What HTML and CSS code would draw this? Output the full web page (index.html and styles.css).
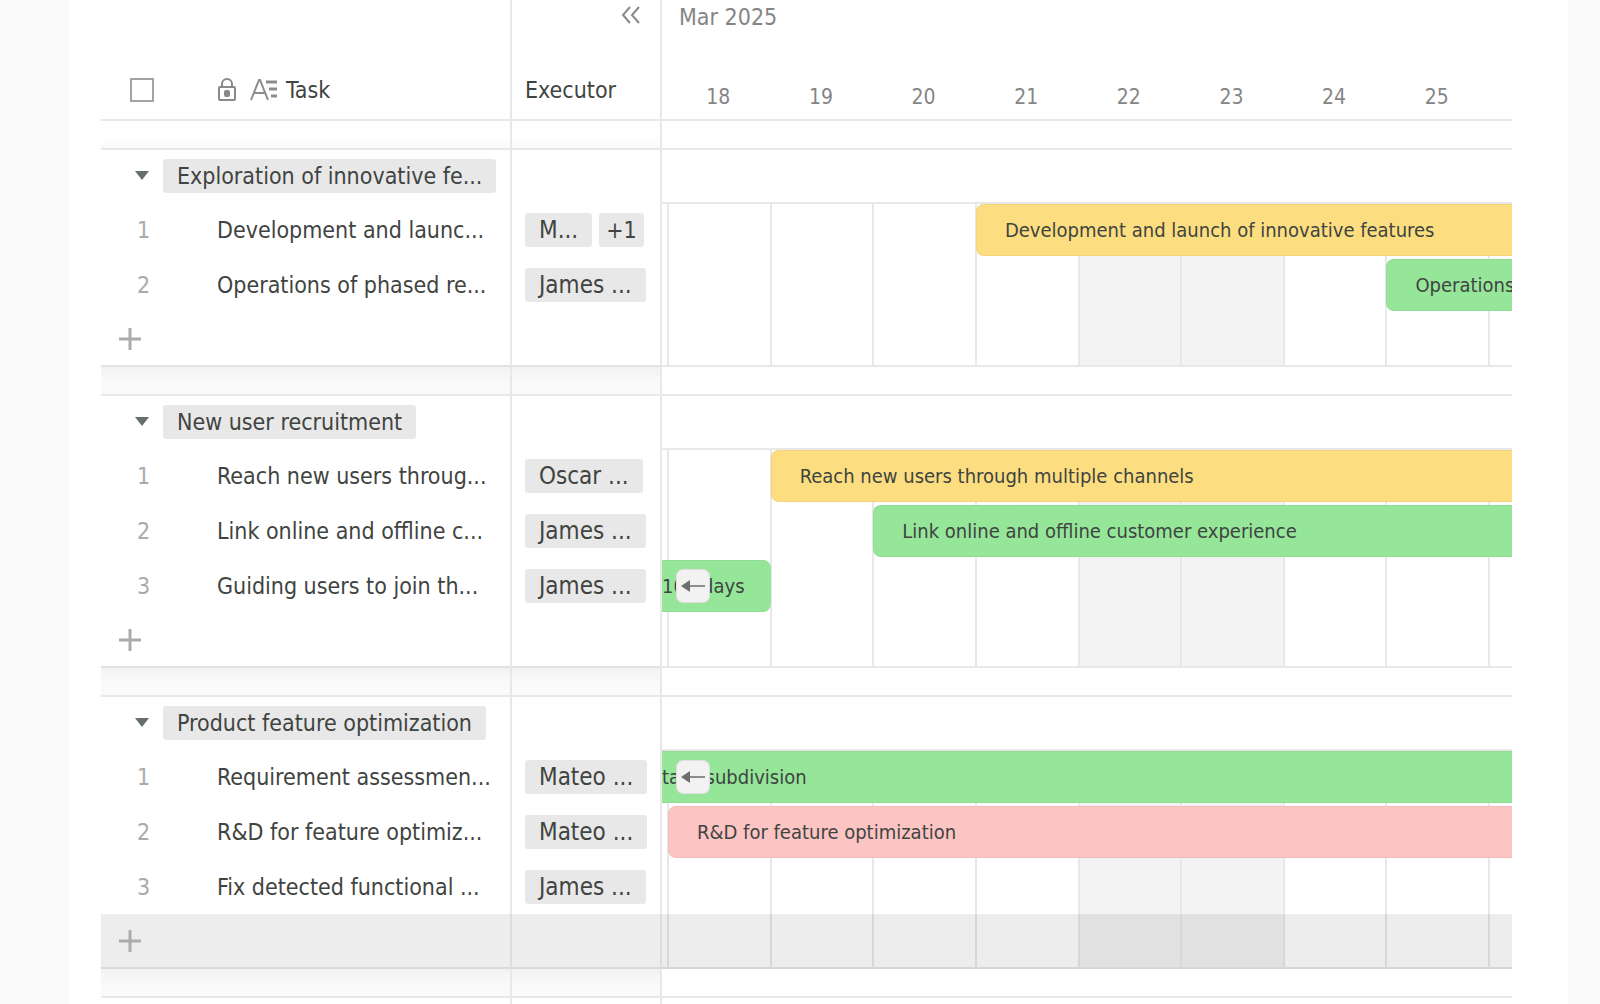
FILE: index.html
```
<!DOCTYPE html>
<html lang="en">
<head>
    <meta charset="UTF-8">
    <meta name="viewport" content="width=device-width, initial-scale=1.0">
    <title>Project Gantt</title>
    <link rel="stylesheet" href="styles.css">
</head>
<body>

<!-- shared icons -->
<svg width="0" height="0" class="sprite">
    <symbol id="caret" viewBox="0 0 14 10"><path d="M0 0h14L7 9z" fill="#66706a"/></symbol>
    <symbol id="plus" viewBox="0 0 22 22"><path d="M11 0v22M0 11h22" stroke="#aeaaaa" stroke-width="3"/></symbol>
    <symbol id="arrow" viewBox="0 0 24 12">
        <path d="M8 6h16" stroke="#8f8b8f" stroke-width="2"/>
        <path d="M0 6l9-6v12z" fill="#6c706c"/>
    </symbol>
</svg>

<main class="gantt">
    <table class="tasks">
        <colgroup>
            <col class="col-task">
            <col class="col-executor">
        </colgroup>
        <thead>
            <tr>
                <th>
                    <div class="task-head">
                        <input type="checkbox" class="check-all" aria-label="Select all">
                        <svg class="icon-lock" width="20" height="24" viewBox="0 0 20 24" fill="none" stroke="#8c8888" stroke-width="2">
                            <path d="M5 9V6a5 5 0 0 1 10 0v3"/>
                            <rect x="2" y="9" width="16" height="13" rx="1"/>
                            <rect x="7" y="12" width="6" height="7" rx="2" fill="#8c8888" stroke="none"/>
                        </svg>
                        <svg class="icon-text" width="28" height="24" viewBox="0 0 28 24" fill="none" stroke="#8f8b8b" stroke-width="2">
                            <path d="M1 22L9 2h1l8 20M4 15h11"/>
                            <path d="M16 4h11M19 11h8M21 18h6" stroke-width="3"/>
                        </svg>
                        <span>Task</span>
                    </div>
                </th>
                <th>
                    <button class="collapse" aria-label="Collapse">
                        <svg width="20" height="18" viewBox="0 0 20 18" fill="none" stroke="#8c8888" stroke-width="2"><path d="M9 1L2 9l7 8M18 1l-7 8 7 8"/></svg>
                    </button>
                    <div class="executor-label">Executor</div>
                </th>
            </tr>
        </thead>

        <tbody>
            <tr class="gap first"><td></td><td></td></tr>
            <tr class="group">
                <td><div class="group-name"><button aria-label="Toggle group"><svg width="14" height="10"><use href="#caret"/></svg></button><span class="tag">Exploration of innovative fe...</span></div></td>
                <td></td>
            </tr>
            <tr>
                <td><div class="task"><span class="num">1</span>Development and launc...</div></td>
                <td><div class="people"><span class="tag">M...</span><span class="tag more">+1</span></div></td>
            </tr>
            <tr>
                <td><div class="task"><span class="num">2</span>Operations of phased re...</div></td>
                <td><div class="people"><span class="tag">James ...</span></div></td>
            </tr>
            <tr class="add">
                <td><button aria-label="Add task"><svg width="22" height="22"><use href="#plus"/></svg></button></td>
                <td></td>
            </tr>
        </tbody>

        <tbody>
            <tr class="gap"><td></td><td></td></tr>
            <tr class="group">
                <td><div class="group-name"><button aria-label="Toggle group"><svg width="14" height="10"><use href="#caret"/></svg></button><span class="tag">New user recruitment</span></div></td>
                <td></td>
            </tr>
            <tr>
                <td><div class="task"><span class="num">1</span>Reach new users throug...</div></td>
                <td><div class="people"><span class="tag">Oscar ...</span></div></td>
            </tr>
            <tr>
                <td><div class="task"><span class="num">2</span>Link online and offline c...</div></td>
                <td><div class="people"><span class="tag">James ...</span></div></td>
            </tr>
            <tr>
                <td><div class="task"><span class="num">3</span>Guiding users to join th...</div></td>
                <td><div class="people"><span class="tag">James ...</span></div></td>
            </tr>
            <tr class="add">
                <td><button aria-label="Add task"><svg width="22" height="22"><use href="#plus"/></svg></button></td>
                <td></td>
            </tr>
        </tbody>

        <tbody>
            <tr class="gap"><td></td><td></td></tr>
            <tr class="group">
                <td><div class="group-name"><button aria-label="Toggle group"><svg width="14" height="10"><use href="#caret"/></svg></button><span class="tag">Product feature optimization</span></div></td>
                <td></td>
            </tr>
            <tr>
                <td><div class="task"><span class="num">1</span>Requirement assessmen...</div></td>
                <td><div class="people"><span class="tag">Mateo ...</span></div></td>
            </tr>
            <tr>
                <td><div class="task"><span class="num">2</span>R&amp;D for feature optimiz...</div></td>
                <td><div class="people"><span class="tag">Mateo ...</span></div></td>
            </tr>
            <tr>
                <td><div class="task"><span class="num">3</span>Fix detected functional ...</div></td>
                <td><div class="people"><span class="tag">James ...</span></div></td>
            </tr>
            <tr class="add active">
                <td><button aria-label="Add task"><svg width="22" height="22"><use href="#plus"/></svg></button></td>
                <td></td>
            </tr>
            <tr class="gap"><td></td><td></td></tr>
            <tr class="rest"><td></td><td></td></tr>
        </tbody>
    </table>

    <section class="timeline">
        <header class="dates">
            <div class="month">Mar 2025</div>
            <div class="days">
                <span></span><span>18</span><span>19</span><span>20</span><span>21</span><span>22</span><span>23</span><span>24</span><span>25</span><span></span>
            </div>
        </header>

        <div class="chart rows-3">
            <i class="day"></i><i class="day"></i><i class="day"></i><i class="day"></i><i class="day"></i><i class="day off"></i><i class="day off"></i><i class="day"></i><i class="day"></i><i class="day"></i>
            <div class="bar yellow row-1 from-21">Development and launch of innovative features</div>
            <div class="bar green row-2 from-25">Operations</div>
        </div>

        <div class="chart rows-4">
            <i class="day"></i><i class="day"></i><i class="day"></i><i class="day"></i><i class="day"></i><i class="day off"></i><i class="day off"></i><i class="day"></i><i class="day"></i><i class="day"></i>
            <div class="bar yellow row-1 from-19">Reach new users through multiple channels</div>
            <div class="bar green row-2 from-20">Link online and offline customer experience</div>
            <div class="bar green row-3 cut to-18">100 days<button class="back" aria-label="Scroll to start"><svg width="24" height="12"><use href="#arrow"/></svg></button></div>
        </div>

        <div class="chart rows-4">
            <i class="day"></i><i class="day"></i><i class="day"></i><i class="day"></i><i class="day"></i><i class="day off"></i><i class="day off"></i><i class="day"></i><i class="day"></i><i class="day"></i>
            <div class="bar green row-1 cut">task subdivision<button class="back" aria-label="Scroll to start"><svg width="24" height="12"><use href="#arrow"/></svg></button></div>
            <div class="bar pink row-2 from-18">R&amp;D for feature optimization</div>
            <div class="hover"></div>
        </div>

        <div class="chart-next"></div>
    </section>
</main>

</body>
</html>
```
FILE: styles.css
```
* {
    box-sizing: border-box;
}

body {
    margin: 0;
    background-color: #fafafa;
    color: #3f4441;
    font-family: Tahoma, "DejaVu Sans Condensed", "Noto Sans", sans-serif;
    font-size: 23px;
    line-height: 34px;
}

button {
    display: block;
    border: 0;
    padding: 0;
    background: none;
    cursor: pointer;
}

svg {
    display: block;
}

.sprite {
    position: absolute;
}

.gantt {
    display: flex;
    align-items: flex-start;
    min-height: 100vh;
    margin: 0 32px 0 69px;
    padding: 0 56px 0 32px;
    background-color: #fff;
}

/* left side */
.tasks {
    flex: none;
    width: 561px;
    table-layout: fixed;
    border-spacing: 0;
    white-space: nowrap;
}

.col-task {
    width: 411px;
}

.col-executor {
    width: 150px;
}

th {
    height: 121px;
    padding: 0;
    border-right: 2px solid #e8e8e8;
    border-bottom: 2px solid #e8e8e8;
    font-weight: normal;
    text-align: left;
    vertical-align: top;
}

td {
    height: 55px;
    padding: 0;
    border-right: 2px solid #e8e8e8;
}

.task-head {
    display: flex;
    align-items: center;
    padding: 73px 0 0 29px;
}

.check-all {
    appearance: none;
    width: 24px;
    height: 24px;
    margin: 0 63px 0 0;
    border: 2px solid #a6a2a2;
}

.icon-lock {
    margin-right: 13px;
}

.icon-text {
    margin-right: 8px;
}

.collapse {
    margin: 6px 19px 49px auto;
}

.executor-label {
    padding-left: 13px;
}

.gap td {
    height: 27px;
    background-image: linear-gradient(#f2f2f2, #fafafa 60%);
}

.gap.first td {
    background-image: linear-gradient(#fff 60%, #fafafa);
}

.group td {
    height: 54px;
    border-top: 2px solid #e8e8e8;
}

.group-name {
    display: flex;
    align-items: center;
}

.group-name button {
    margin: 0 14px 0 34px;
}

.tag {
    padding: 0 14px;
    border-radius: 3px;
    background-color: #e8e8e8;
}

.tag.more {
    padding: 0 7px;
    font-size: 23px;
}

.task {
    display: flex;
}

.num {
    width: 85px;
    margin-right: 31px;
    text-align: center;
    color: #aaa;
}

.people {
    display: flex;
    gap: 7px;
    padding-left: 13px;
    font-size: 24px;
}

.add td {
    border-bottom: 2px solid #e2e2e2;
}

.add button {
    margin-left: 18px;
}

.add.active td {
    background-color: #ededed;
    border-bottom-color: #d9dcd6;
    border-right-color: #dcdeda;
}

.rest td {
    height: 8px;
    border-top: 2px solid #e8e8e8;
}

/* right side */
.timeline {
    flex: 1;
    min-width: 0;
    overflow: hidden;
    white-space: nowrap;
}

.dates {
    height: 121px;
    border-bottom: 2px solid #e8e8e8;
    color: #858585;
}

.month {
    padding-left: 17px;
}

.days,
.chart {
    display: grid;
    grid-template-columns: 5px repeat(8, 1fr) 24px;
}

.days {
    padding-top: 46px;
    font-size: 21px;
    text-align: center;
}

.chart {
    margin-top: 27px;
    padding-top: 52px;
    border-top: 2px solid #e8e8e8;
}

.rows-3 {
    grid-template-rows: repeat(3, 55px);
}

.rows-4 {
    grid-template-rows: repeat(4, 55px);
}

.day {
    grid-row: 1 / -1;
    border: solid #e8e8e8;
    border-width: 2px 0 2px 2px;
}

.day:nth-child(1) { grid-column: 1; border-left: 0; }
.day:nth-child(2) { grid-column: 2; }
.day:nth-child(3) { grid-column: 3; }
.day:nth-child(4) { grid-column: 4; }
.day:nth-child(5) { grid-column: 5; }
.day:nth-child(6) { grid-column: 6; }
.day:nth-child(7) { grid-column: 7; }
.day:nth-child(8) { grid-column: 8; }
.day:nth-child(9) { grid-column: 9; }
.day:nth-child(10) { grid-column: 10; }

.off {
    background-color: #f3f3f3;
}

.bar {
    position: relative;
    overflow: hidden;
    margin: 2px 0 1px 1px;
    padding: 0 0 0 28px;
    border: 1px solid rgba(0, 0, 0, 0.04);
    border-right: 0;
    border-radius: 8px 0 0 8px;
    font-size: 20px;
    line-height: 50px;
}

.yellow { background-color: #fcde80; }
.green { background-color: #95e699; }
.pink { background-color: #fdc4c4; }

.row-1 { grid-row: 1; }
.row-2 { grid-row: 2; }
.row-3 { grid-row: 3; }

.from-18 { grid-column: 2 / -1; }
.from-19 { grid-column: 3 / -1; }
.from-20 { grid-column: 4 / -1; }
.from-21 { grid-column: 5 / -1; }
.from-25 { grid-column: 9 / -1; }

.cut {
    grid-column: 1 / -1;
    margin-left: 0;
    padding-left: 0;
    border-left: 0;
    border-radius: 0;
}

.cut.to-18 {
    grid-column: 1 / 3;
    margin-right: -1px;
    border-radius: 0 8px 8px 0;
}

.back {
    position: absolute;
    top: 8px;
    left: 14px;
    width: 34px;
    height: 34px;
    padding: 0 4px;
    border: 1px solid #e2dce2;
    border-radius: 7px;
    background-color: #f2f2f2;
}

.hover {
    grid-row: 4;
    grid-column: 1 / -1;
    background-color: rgba(0, 5, 0, 0.07);
    z-index: 1;
}

.chart-next {
    height: 8px;
    margin-top: 27px;
    border-top: 2px solid #e8e8e8;
}
```
